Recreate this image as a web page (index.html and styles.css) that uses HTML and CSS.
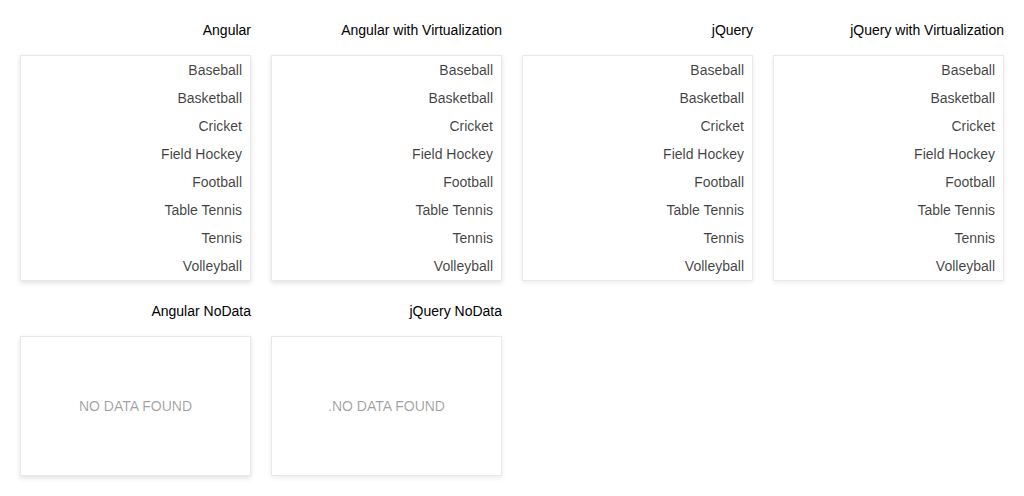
FILE: index.html
```html
<!DOCTYPE html>
<html>
<head>
<meta charset="utf-8">
<link rel="stylesheet" href="styles.css">
</head>
<body>
<div class="grid">
  <section class="sample">
    <h4 class="title">Angular</h4>
    <ul class="list shadow">
      <li>Baseball</li><li>Basketball</li><li>Cricket</li><li>Field Hockey</li><li>Football</li><li>Table Tennis</li><li>Tennis</li><li>Volleyball</li>
    </ul>
  </section>
  <section class="sample">
    <h4 class="title">Angular with Virtualization</h4>
    <ul class="list shadow">
      <li>Baseball</li><li>Basketball</li><li>Cricket</li><li>Field Hockey</li><li>Football</li><li>Table Tennis</li><li>Tennis</li><li>Volleyball</li>
    </ul>
  </section>
  <section class="sample">
    <h4 class="title">jQuery</h4>
    <ul class="list light">
      <li>Baseball</li><li>Basketball</li><li>Cricket</li><li>Field Hockey</li><li>Football</li><li>Table Tennis</li><li>Tennis</li><li>Volleyball</li>
    </ul>
  </section>
  <section class="sample">
    <h4 class="title">jQuery with Virtualization</h4>
    <ul class="list light">
      <li>Baseball</li><li>Basketball</li><li>Cricket</li><li>Field Hockey</li><li>Football</li><li>Table Tennis</li><li>Tennis</li><li>Volleyball</li>
    </ul>
  </section>
  <section class="sample">
    <h4 class="title">Angular NoData</h4>
    <div class="nodata shadow">NO DATA FOUND</div>
  </section>
  <section class="sample">
    <h4 class="title">jQuery NoData</h4>
    <div class="nodata light">.NO DATA FOUND</div>
  </section>
</div>
</body>
</html>
```
FILE: styles.css
```css
html, body {
  margin: 0;
  padding: 0;
  background: #fff;
}
body {
  font-family: "Liberation Sans", Arial, sans-serif;
  font-size: 14px;
}
.grid {
  display: grid;
  grid-template-columns: repeat(4, 231px);
  column-gap: 20px;
  row-gap: 20px;
  padding: 20px;
}
.sample {
  display: flex;
  flex-direction: column;
}
.title {
  margin: 0 0 15px 0;
  font-size: 14px;
  font-weight: 400;
  line-height: 20px;
  text-align: right;
  color: #000;
}
.list {
  list-style: none;
  margin: 0;
  padding: 0;
  border: 1px solid #e8e8e8;
  background: #fff;
}
.list li {
  height: 28px;
  line-height: 28px;
  padding: 0 8px 0 16px;
  text-align: right;
  color: rgba(0,0,0,0.75);
}
.shadow {
  box-shadow: 0 2px 5px rgba(0,0,0,0.12);
}
.light {
  box-shadow: 0 2px 5px rgba(0,0,0,0.07);
}
.nodata {
  height: 138px;
  border: 1px solid #e8e8e8;
  display: flex;
  align-items: center;
  justify-content: center;
  color: rgba(0,0,0,0.38);
  background: #fff;
}
```
